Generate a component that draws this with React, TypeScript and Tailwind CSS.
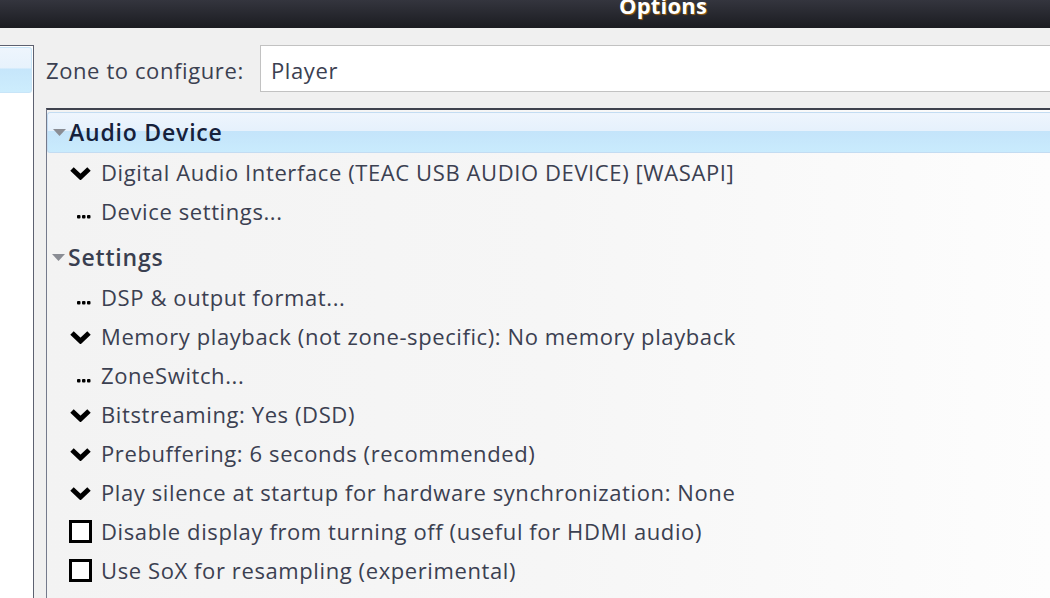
import React from "react";

type Row =
  | { kind: "header"; label: string; selected?: boolean }
  | { kind: "choice" | "more" | "check"; label: string };

const rows: Row[] = [
  { kind: "header", label: "Audio Device", selected: true },
  { kind: "choice", label: "Digital Audio Interface (TEAC USB AUDIO DEVICE) [WASAPI]" },
  { kind: "more", label: "Device settings..." },
  { kind: "header", label: "Settings" },
  { kind: "more", label: "DSP & output format..." },
  { kind: "choice", label: "Memory playback (not zone-specific): No memory playback" },
  { kind: "more", label: "ZoneSwitch..." },
  { kind: "choice", label: "Bitstreaming: Yes (DSD)" },
  { kind: "choice", label: "Prebuffering: 6 seconds (recommended)" },
  { kind: "choice", label: "Play silence at startup for hardware synchronization: None" },
  { kind: "check", label: "Disable display from turning off (useful for HDMI audio)" },
  { kind: "check", label: "Use SoX for resampling (experimental)" },
];

function Chevron() {
  return (
    <svg width="21" height="14" viewBox="0 0 21 14" className="shrink-0">
      <polyline points="2,3 10.5,11 19,3" fill="none" stroke="#000" strokeWidth="5" strokeLinecap="butt" strokeLinejoin="miter" />
    </svg>
  );
}

function Dots() {
  return (
    <svg width="21" height="20" viewBox="0 0 21 20" className="shrink-0">
      <rect x="7" y="13" width="3.5" height="3.5" rx="1" fill="#000" />
      <rect x="12" y="13" width="3.5" height="3.5" rx="1" fill="#000" />
      <rect x="17" y="13" width="3.5" height="3.5" rx="1" fill="#000" />
    </svg>
  );
}

function Box() {
  return <span className="w-[23px] h-[23px] -ml-[1px] mr-[-1px] shrink-0 border-[3px] border-black bg-white" />;
}

function TreeRow({ row, first }: { row: Row; first: boolean }) {
  if (row.kind === "header") {
    return (
      <div
        className={
          "h-[41px] flex items-center pl-[5px] gap-[3px] " +
          (first ? "mt-[2px] " : "mt-[6px] ") +
          (row.selected
            ? "rounded-l-[3px] border border-r-0 border-[#c3dcf2] bg-[linear-gradient(to_bottom,#eef5fd_0%,#e6f1fc_45%,#c4e4fa_47%,#c9ebfd_100%)] text-[#15203a]"
            : "text-[#3a3f50]")
        }
      >
        <svg width="13" height="8" viewBox="0 0 13 8" className="shrink-0">
          <polygon points="0,0 13,0 6.5,7" fill="#8a8d94" />
        </svg>
        <span className="text-[23px] font-semibold tracking-[0.8px]">{row.label}</span>
      </div>
    );
  }
  return (
    <div className="h-[39px] flex items-center pl-[23px] gap-[10px] text-[#3b4051]">
      {row.kind === "choice" && <Chevron />}
      {row.kind === "more" && <Dots />}
      {row.kind === "check" && <Box />}
      <span className="text-[22px] tracking-[0.6px] -mt-[1px]">{row.label}</span>
    </div>
  );
}

export default function App() {
  return (
    <div className="w-[1050px] h-[598px] overflow-hidden bg-[#f0f0f0] flex flex-col font-['Open_Sans','Noto_Sans',sans-serif]">
      {/* title bar */}
      <div className="h-[28px] shrink-0 flex bg-[linear-gradient(to_bottom,#34353e,#1b1c21)] overflow-hidden">
        <span className="ml-[619px] -mt-[11px] text-[22px] font-bold text-white tracking-[0.2px] [text-shadow:1px_1px_1px_#a06010]">Options</span>
      </div>

      <div className="flex flex-1 min-h-0 pt-[17px]">
        {/* left nav */}
        <div className="w-[34px] shrink-0 bg-white border-t border-r border-[#5d6170] pt-[1px]">
          <div className="h-[46px] mr-[1px] rounded-r-[3px] border border-l-0 border-[#c8e5f8] bg-[linear-gradient(to_bottom,#eef5fd_0%,#e7f2fc_45%,#c6e6fb_48%,#cdedfd_100%)]" />
        </div>

        <div className="flex-1 min-w-0 pl-[12px] flex flex-col">
          {/* zone selector */}
          <div className="h-[47px] shrink-0 flex items-center">
            <span className="w-[214px] shrink-0 text-[22px] tracking-[0.6px] text-[#3b4051] pt-[3px]">Zone to configure:</span>
            <div className="flex-1 h-[47px] bg-white border border-r-0 border-[#c2c2c2] flex items-center pl-[10px]">
              <span className="text-[22px] tracking-[0.6px] text-[#3b4051] pt-[3px]">Player</span>
            </div>
          </div>

          {/* settings tree */}
          <div className="mt-[16px] flex-1 border-t-2 border-l border-t-[#3f424e] border-l-[#747a8c] bg-[linear-gradient(to_right,#f3f3f3_0%,#f6f6f6_50%,#fdfdfd_100%)]">
            {rows.map((r, i) => (
              <TreeRow key={i} row={r} first={i === 0} />
            ))}
          </div>
        </div>
      </div>
    </div>
  );
}
